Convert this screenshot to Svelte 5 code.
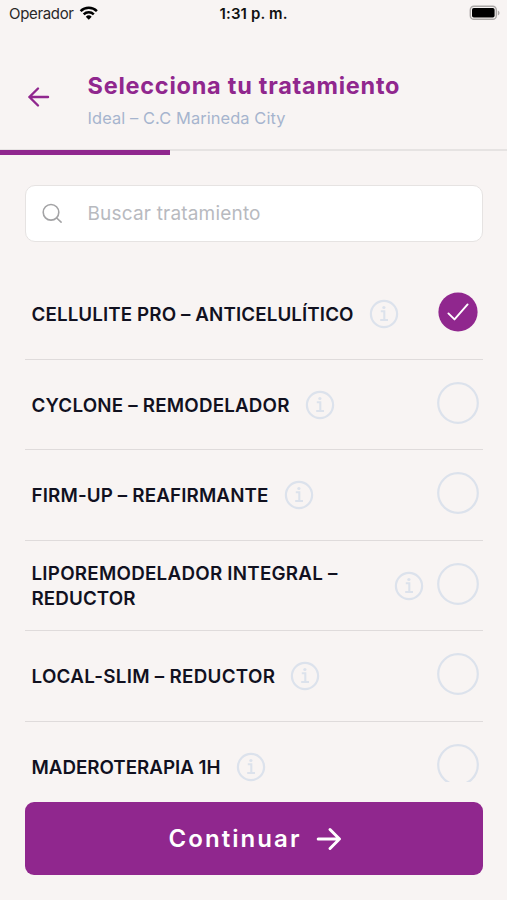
<script>
  const treatments = [
    { lines: ['CELLULITE PRO – ANTICELULÍTICO'], widths: [322] },
    { lines: ['CYCLONE – REMODELADOR'], widths: [258] },
    { lines: ['FIRM-UP – REAFIRMANTE'], widths: [237] },
    { lines: ['LIPOREMODELADOR INTEGRAL –', 'REDUCTOR'], widths: [306, 104] },
    { lines: ['LOCAL-SLIM – REDUCTOR'], widths: [243] },
    { lines: ['MADEROTERAPIA 1H'], widths: [189] }
  ];
  let selected = $state(0);

  function fit(node, width) {
    const range = document.createRange();
    range.selectNodeContents(node);
    const natural = range.getBoundingClientRect().width;
    const tracking = (width - natural) / (node.textContent.length - 1);
    node.style.letterSpacing = `${tracking}px`;
    node.style.marginRight = `${-tracking}px`;
  }
</script>

<main class="screen">
  <div class="status">
    <div class="carrier">
      <span class="line" use:fit={65}>Operador</span>
      <svg width="20" height="16" viewBox="0 0 20 16" fill="none" stroke="#000" stroke-width="2.5">
        <path d="M1.6 6.1a11.6 11.6 0 0 1 16.3 0" />
        <path d="M4.7 9.4a7.2 7.2 0 0 1 10.1 0" />
        <path d="M9.75 14.7 6.8 11.8a4.2 4.2 0 0 1 5.9 0z" fill="#000" stroke="none" />
      </svg>
    </div>
    <div class="clock"><span class="line" use:fit={68}>1:31 p. m.</span></div>
    <div class="battery">
      <svg width="32" height="16" viewBox="0 0 32 16">
        <rect x="1.3" y="1.3" width="26" height="13" rx="3.6" fill="#f8f4f3" stroke="#aaa7a6" stroke-width="1.4" />
        <rect x="3" y="3" width="22.6" height="9.6" rx="1.8" fill="#000" />
        <path d="M28.8 5.4c2.3.9 2.3 4 0 5z" fill="#aaa7a6" />
      </svg>
    </div>
  </div>

  <header>
    <button class="back" aria-label="Volver">
      <svg width="24" height="24" viewBox="0 0 24 24" fill="none" stroke="#90278e" stroke-width="2.4" stroke-linecap="round" stroke-linejoin="round">
        <path d="M22 12H3.4M12 3.5 3.4 12l8.6 8.5" />
      </svg>
    </button>
    <div class="heading">
      <h1><span class="line" use:fit={312}>Selecciona tu tratamiento</span></h1>
      <p><span class="line" use:fit={198}>Ideal – C.C Marineda City</span></p>
    </div>
  </header>
  <div class="progress"><div class="done"></div></div>

  <label class="search">
    <svg width="22" height="22" viewBox="0 0 22 22" fill="none" stroke="#a3a3a5" stroke-width="1.6" stroke-linecap="round">
      <circle cx="9" cy="9.3" r="7.8" /><path d="m14.7 15 4.4 4.2" />
    </svg>
    <span class="line" use:fit={173}>Buscar tratamiento</span>
  </label>

  <section class="list">
    {#each treatments as item, i}
      <div class="row">
        <div class="name" class:wide={item.lines.length > 1}>
          {#each item.lines as text, n}
            <div><span class="line" use:fit={item.widths[n]}>{text}</span></div>
          {/each}
        </div>
        <svg class="info" width="30" height="30" viewBox="0 0 30 30" fill="none" stroke="#dce2ec" stroke-width="2.2">
          <circle cx="15" cy="15" r="13.1" />
          <path d="M11.8 12.3h3.5v8.5M11.2 21h7.8" stroke-width="2.1" />
          <circle cx="14.9" cy="8.5" r="1.6" fill="#dce2ec" stroke="none" />
        </svg>
        <button class="radio" aria-label={item.lines.join(' ')} onclick={() => (selected = i)}>
          <svg width="42" height="42" viewBox="0 0 42 42" fill="none">
            {#if selected === i}
              <circle cx="21" cy="21" r="19.6" fill="#90278e" />
              <path d="m11.4 22.4 6.1 6L30.6 13.4" stroke="#fff" stroke-width="1.9" stroke-linecap="round" stroke-linejoin="round" />
            {:else}
              <circle cx="21" cy="21" r="19.8" stroke="#dce2ec" stroke-width="2.2" />
            {/if}
          </svg>
        </button>
      </div>
    {/each}
  </section>

  <button class="continue">
    <span class="line" use:fit={131}>Continuar</span>
    <svg width="26" height="24" viewBox="0 0 26 24" fill="none" stroke="#fff" stroke-width="3" stroke-linecap="round" stroke-linejoin="round">
      <path d="M2.2 12h21M14 2.5l9.5 9.5-9.5 9.5" />
    </svg>
  </button>
</main>

<style>
  :global(body) { background: #f8f4f3; }
  * { box-sizing: border-box; }
  .screen {
    width: 507px; height: 900px; overflow: hidden;
    display: flex; flex-direction: column;
    background: #f8f4f3; color: #11111f;
    font-family: Inter, "Open Sans", sans-serif;
  }
  .line { white-space: nowrap; }
  svg { display: block; flex: none; }
  button { border: 0; padding: 0; background: none; font: inherit; cursor: pointer; }
  .status {
    height: 28px; flex: none; padding: 0 6px 0 9px;
    display: grid; grid-template-columns: 1fr 68px 1fr;
    align-items: center; font-size: 15px; color: #111;
  }
  .carrier { display: flex; gap: 5px; align-items: center; color: #2a2828; }
  .carrier .line { margin-top: -1px; }
  .carrier svg { margin-top: -3px; }
  .clock { font-weight: 600; margin: -1px 0 0 -1.5px; white-space: nowrap; }
  .battery { justify-self: end; margin-top: -2px; }
  header { height: 121px; flex: none; display: flex; padding: 42px 0 0 26px; }
  .back { width: 24px; height: 54px; display: flex; align-items: center; }
  .heading { margin-left: 37.5px; }
  h1 { margin: 0; font-size: 23.5px; line-height: 32px; font-weight: 700; color: #90278e; }
  p { margin: 4px 0 0; font-size: 16.4px; line-height: 24px; color: #a6b4ce; }
  .progress { height: 6px; flex: none; border-top: 2px solid #e6e3e2; }
  .done { width: 170px; height: 5px; margin-top: -1px; background: #90278e; }
  .search {
    height: 57px; flex: none; margin: 30px 24px 0 25px; padding-left: 16px;
    display: flex; align-items: center; gap: 23.5px;
    background: #fff; border: 1.5px solid #e6e3e2; border-radius: 10px;
    color: #b8babf; font-size: 19px;
  }
  .list { height: 513px; flex: none; margin: 27px 24px 0 25px; overflow: hidden; }
  .row {
    height: 90.5px; padding: 0 4px 0 6.5px;
    display: flex; align-items: center; border-bottom: 1.5px solid #dfdbdb;
  }
  .name { padding-top: 2px; font-size: 18.8px; line-height: 25.5px; font-weight: 600; white-space: nowrap; }
  .name.wide { width: 347px; }
  .info { margin: 1px 0 0 15.5px; }
  .radio { margin: -3px 0 0 auto; }
  .continue {
    height: 73px; flex: none; margin: 20px 24px 0 25px; padding-left: 2px;
    display: flex; align-items: center; justify-content: center; gap: 16px;
    background: #90278e; border-radius: 9px; color: #fff;
    font-size: 24px; font-weight: 600;
  }
</style>
